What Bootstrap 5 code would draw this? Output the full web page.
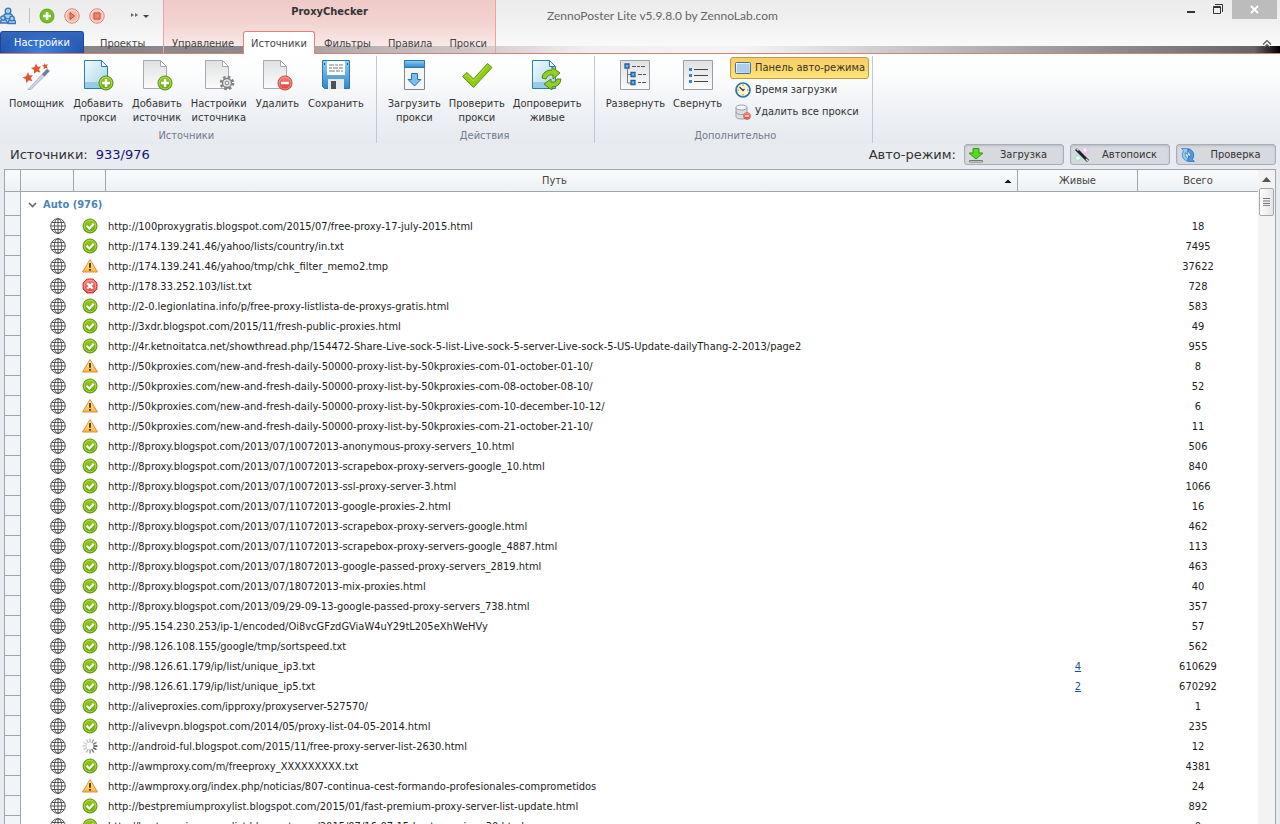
<!DOCTYPE html>
<html lang="ru">
<head>
<meta charset="utf-8">
<meta name="viewport" content="width=device-width, initial-scale=1">
<title>ZennoPoster Lite v5.9.8.0 by ZennoLab.com</title>
<link href="https://cdn.jsdelivr.net/npm/bootstrap@5.3.0/dist/css/bootstrap.min.css" rel="stylesheet">
<style>
  body { font: 11px/14px "DejaVu Sans Condensed", "DejaVu Sans", sans-serif; color: #333; background: #e8ebf0; }
  button, a { color: inherit; }
  svg { display: block; flex: none; }
  .plain { background: none; border: 0; padding: 0; }
  .verdana { font-family: "DejaVu Sans", sans-serif; font-size: 13px; }

  /* title bar and tabs */
  .titlebar {
    height: 54px; border-bottom: 1px solid #d97f7d;
    background:
      linear-gradient(90deg, #858585 0, #8c8a8a 19%, #b5adad 27%, #d2c8c8 37%, #efefef 46%, #f4f4f4 58%, #c6c6c6 71%, #b0b0b0 77%, #666 98%, #000 100%) bottom / 100% 7px no-repeat,
      linear-gradient(#ececec, #f1f1f1 45%, #fcfcfc);
  }
  .left-part { flex: 0 0 163px; }
  .context-part {
    border: solid #e9a3a0; border-width: 0 1px;
    background: linear-gradient(#efcbc8, #f2d3d0 50%, #f9e9e7) top / 100% calc(100% - 7px) no-repeat;
  }
  .context-tabs { gap: 1px; }
  .caption-row { height: 31px; }
  .context-name { padding-top: 5px; }
  .quick { gap: 9px; }
  .tab-link { height: 22px; padding: 5px 7px 0; border: 1px solid transparent; border-bottom: 0; color: #444; text-decoration: none; }
  .tab-link.active { height: 23px; background: #fff; border-color: #e08480; border-radius: 3px 3px 0 0; }
  .app-tab { width: 84px; height: 22px; color: #fff; border: 1px solid #1d4795; border-bottom: 0; border-radius: 3px 3px 0 0;
    background: radial-gradient(ellipse at 50% 100%, #3f86e0, transparent 70%), linear-gradient(#3567bd, #1f53ae); }
  .product { font: 12px/16px Lato, "Noto Sans", sans-serif; color: #666; padding: 8px 0 0 51px; }
  .close-box { width: 45px; height: 19px; background: #bcbcbc; margin-right: 3px; }

  /* ribbon */
  .ribbon { height: 90px; padding-top: 2px; background: linear-gradient(#fff, #fbfcfd 25%, #eceff4 70%, #e6e9ee); }
  .ribbon-group { height: 87px; padding: 3px 8px 0 7px; border-right: 1px solid #c3c7cf; }
  .ribbon-group:first-child { padding-left: 5px; }
  .ribbon-group:last-child { padding-right: 3px; }
  .spaced { gap: 1px; }
  .big { padding: 0 4px; }
  .big span { margin-top: 6px; line-height: 14px; }
  .group-name { color: #74798c; line-height: 14px; }
  .small-cmd { height: 22px; padding: 0 3px 0 4px; border: 1px solid transparent; border-radius: 3px; gap: 4px; text-align: left; }
  .small-cmd.on { border-color: #c59a37; background: linear-gradient(#f6cd6b, #fbd766 50%, #ffe57c); }
  .small-list { margin: -2px 0 0 4px; }

  /* status line */
  .status { height: 25px; padding: 0 4px 4px 10px; }
  .modes { gap: 6px; }
  .mode { width: 100px; height: 21px; padding: 0 0 0 3px; border: 1px solid #a9adb5; border-radius: 3px; background: #d6d9de; box-shadow: inset 0 1px 2px #b6bac2;
    font: 11px/14px "DejaVu Sans Condensed", "DejaVu Sans", sans-serif; }
  .counter { color: #12127e; }

  /* list of sources */
  .panel { margin: 0 4px; min-height: 0; border: 1px solid #a0a6b0; border-bottom: 0; background: #fff; }
  .sources { table-layout: fixed; border-collapse: separate; border-spacing: 0; color: #1c1c1c; }
  .sources th, .sources td { padding: 0; white-space: nowrap; overflow: hidden; }
  .sources th { height: 22px; font-weight: 400; text-align: center; color: #444; border: solid #a0a6b0; border-width: 0 1px 1px 0; background: linear-gradient(#fafbfc, #edf1f4); }
  .sources th:last-child { border-right: 0; }
  .sources td { height: 20px; padding-top: 1px; text-align: center; }
  .sources td:first-child { background: #f2f5f8; border: solid #a0a6b0; border-width: 0 1px 1px 0; }
  .sources td svg { margin: auto; }
  .sources td.pic { padding-top: 0; }
  .sources td.kind { padding-left: 20px; }
  .sources td.addr { text-align: left; padding-left: 2px; }
  .sources .group-line td { height: 24px; }
  .group-line .title { color: #4a86b8; }
  .sources a { color: #1b4f9c; }
  .scroll { width: 17px; background: #f3f3f4; }
  .thumb { width: 15px; height: 28px; border: 1px solid #a3a6ab; border-radius: 2px; background: linear-gradient(90deg, #fdfdfd, #e4e5e8); }
</style>
</head>
<body class="vh-100 overflow-hidden d-flex flex-column">

<svg width="0" height="0" class="position-absolute" aria-hidden="true">
  <defs>
    <linearGradient id="gBlue" x1="0" y1="0" x2="1" y2="1"><stop stop-color="#f1fafd"/><stop offset="1" stop-color="#a5d4ea"/></linearGradient>
    <linearGradient id="gGray" x1="0" y1="0" x2="0" y2="1"><stop stop-color="#dfe0e2"/><stop offset="1" stop-color="#fcfcfc"/></linearGradient>
    <linearGradient id="gGreen" x1="0" y1="0" x2="0" y2="1"><stop stop-color="#9ccb1e"/><stop offset="1" stop-color="#62a50e"/></linearGradient>
    <linearGradient id="gRed" x1="0" y1="0" x2="0" y2="1"><stop stop-color="#f4837a"/><stop offset="1" stop-color="#df3f35"/></linearGradient>
    <linearGradient id="gWarn" x1="0" y1="0" x2="0" y2="1"><stop stop-color="#fff0b8"/><stop offset="1" stop-color="#f7b73c"/></linearGradient>
    <linearGradient id="gSky" x1="0" y1="0" x2="0" y2="1"><stop stop-color="#8fd0f2"/><stop offset="1" stop-color="#2e86cf"/></linearGradient>
    <symbol id="plus" viewBox="0 0 16 16"><circle cx="8" cy="8" r="7" fill="url(#gGreen)" stroke="#4d8a0c"/><circle cx="8" cy="8" r="5.9" fill="none" stroke="#c7e68a" stroke-width=".7"/><path d="M8 4v8M4 8h8" stroke="#fff" stroke-width="2.4"/></symbol>
    <symbol id="minus" viewBox="0 0 16 16"><circle cx="8" cy="8" r="7" fill="url(#gRed)" stroke="#c43c34"/><circle cx="8" cy="8" r="6" fill="none" stroke="#f7aaa4" stroke-width=".7"/><path d="M4 8h8" stroke="#fff" stroke-width="2.4"/></symbol>
    <symbol id="pageBlue" viewBox="0 0 32 32"><path d="M2.5 1.500h17l6 6v22h-23z" fill="url(#gBlue)" stroke="#2c7fa8"/><path d="M3 23h22v6H3z" fill="#86c0dc" opacity=".7"/><path d="M19.500 1.500v6h6z" fill="#fff" stroke="#2c7fa8"/></symbol>
    <symbol id="pageGray" viewBox="0 0 32 32"><path d="M2.5 1.500h17l6 6v22h-23z" fill="url(#gGray)" stroke="#a8aaad"/><path d="M19.500 1.500v6h6z" fill="#fff" stroke="#a8aaad"/></symbol>
    <symbol id="globe" viewBox="0 0 16 16"><g fill="none" stroke="#444" stroke-width=".9"><circle cx="8" cy="8" r="7.300" fill="#fff"/><ellipse cx="8" cy="8" rx="3.700" ry="7.300"/><path d="M8 .7v14.600M.7 8h14.600M2 4.500h12M2 11.500h12"/></g></symbol>
    <symbol id="ok" viewBox="0 0 16 16"><circle cx="8" cy="8" r="7" fill="url(#gGreen)" stroke="#5a930f"/><circle cx="8" cy="8" r="5.800" fill="none" stroke="#b4dc5c" stroke-width=".8"/><path d="M4.500 7.800 7.300 10.600 11.700 5.800" fill="none" stroke="#fff" stroke-width="2.100"/></symbol>
    <symbol id="warn" viewBox="0 0 16 16"><path d="M8 1.500 15.500 14H.5z" fill="url(#gWarn)" stroke="#dc9035" stroke-linejoin="round"/><path d="M8 5v4.800M8 11v1.800" stroke="#4a3210" stroke-width="1.800"/></symbol>
    <symbol id="bad" viewBox="0 0 16 16"><path d="M5 1h6l4 4v6l-4 4H5l-4-4V5z" fill="url(#gRed)" stroke="#cf3d38"/><path d="M5.800 2.500h4.400l3.300 3.300v4.400l-3.300 3.300H5.800l-3.300-3.300V5.800z" fill="none" stroke="#f6a8a2" stroke-width=".8"/><path d="m5.200 5.200 5.600 5.600m0-5.600-5.600 5.600" stroke="#fff" stroke-width="2.300"/></symbol>
    <symbol id="busy" viewBox="0 0 16 16"><g stroke-width="1.500" stroke="#444"><path d="M8 .5v4" opacity=".35"/><path d="m11.700 1.500-2 3.500" opacity=".5"/><path d="m14.500 4.300-3.500 2" opacity=".7"/><path d="M15.500 8h-4"/><path d="m14.500 11.700-3.500-2" opacity=".9"/><path d="m11.700 14.500-2-3.500" opacity=".75"/><path d="M8 15.500v-4" opacity=".55"/><path d="m4.300 14.500 2-3.500" opacity=".4"/><path d="m1.500 11.700 3.500-2" opacity=".3"/><path d="M.5 8h4" opacity=".25"/><path d="m1.500 4.300 3.500 2" opacity=".22"/><path d="m4.300 1.500 2 3.500" opacity=".3"/></g></symbol>
  </defs>
</svg>

<header class="titlebar d-flex flex-shrink-0">
  <div class="left-part">
    <div class="caption-row quick d-flex align-items-center">
      <svg width="16" height="18" viewBox="0 0 16 18"><g fill="#a9d0ef" stroke="#3777b5" stroke-width="1.300"><path d="M3.500 10Q3.500 6.500 8 6.500t4.500 3.500l-4.500 2z"/><circle cx="8" cy="4" r="2.800"/><path d="M.5 16q0-4 3-4t4 4z"/><circle cx="3" cy="11" r="2.200"/><path d="M8 16.500q0-4 4-4t3.500 4z"/><circle cx="12" cy="11.500" r="2.300"/></g></svg>
      <span class="vr ms-1 my-2"></span>
      <button class="plain" aria-label="Добавить"><svg width="16" height="16" viewBox="0 0 16 16"><circle cx="8" cy="8" r="7.500" fill="#67b01a"/><circle cx="8" cy="8" r="6.600" fill="#78bd28"/><path d="M8 4v8M4 8h8" stroke="#fff" stroke-width="2.600"/></svg></button>
      <button class="plain" aria-label="Запустить"><svg width="16" height="16" viewBox="0 0 16 16"><circle cx="8" cy="8" r="7.200" fill="#f8ddd6" stroke="#e0806f"/><circle cx="8" cy="8" r="5.500" fill="#f2bcae"/><path d="M6 4.500 10.500 8 6 11.500z" fill="#e98876" stroke="#c84b36"/></svg></button>
      <button class="plain" aria-label="Остановить"><svg width="16" height="16" viewBox="0 0 16 16"><circle cx="8" cy="8" r="7.200" fill="#f8ddd6" stroke="#e0806f"/><circle cx="8" cy="8" r="5.500" fill="#f2bcae"/><path d="M5 5h6v6H5z" fill="#e98876" stroke="#c84b36"/></svg></button>
      <button class="plain ms-3" aria-label="Настройка панели"><svg width="20" height="8" viewBox="0 0 20 8"><path d="M1 1l3 2-3 2zM5 1l3 2-3 2z" fill="#666"/><path d="M13 3h6l-3 3z" fill="#444"/></svg></button>
    </div>
    <nav class="d-flex">
      <button class="app-tab p-0">Настройки</button>
      <a href="#" class="tab-link ms-2">Проекты</a>
    </nav>
  </div>
  <div class="context-part">
    <div class="caption-row context-name text-center fw-bold">ProxyChecker</div>
    <nav class="context-tabs d-flex">
      <a href="#" class="tab-link">Управление</a>
      <a href="#" class="tab-link active" aria-current="page">Источники</a>
      <a href="#" class="tab-link">Фильтры</a>
      <a href="#" class="tab-link">Правила</a>
      <a href="#" class="tab-link">Прокси</a>
    </nav>
  </div>
  <div class="product flex-grow-1">ZennoPoster Lite v5.9.8.0 by ZennoLab.com</div>
  <div class="d-flex flex-column justify-content-between">
    <div class="d-flex align-items-start">
      <button class="plain me-3" aria-label="Свернуть окно"><svg width="10" height="19" viewBox="0 0 10 19"><path d="M1 12h8" stroke="#333" stroke-width="2"/></svg></button>
      <button class="plain me-2" aria-label="Восстановить окно"><svg width="12" height="19" viewBox="0 0 12 19"><path d="M1.500 6.500h7v7h-7zM1 7.500h8M3 4.500h7.500V12" fill="none" stroke="#333"/></svg></button>
      <button class="plain close-box" aria-label="Закрыть"><svg class="mx-auto" width="9" height="9" viewBox="0 0 9 9"><path d="m1 1 7 7m0-7-7 7" stroke="#fff" stroke-width="1.800"/></svg></button>
    </div>
    <button class="plain ms-auto me-2 mb-1" aria-label="Свернуть ленту"><svg width="10" height="10" viewBox="0 0 10 10"><path d="M1 5.500 5 1.500l4 4M2 8.500l3-3 3 3" fill="none" stroke="#555" stroke-width="1.200"/></svg></button>
  </div>
</header>

<section class="ribbon d-flex flex-shrink-0">
  <div class="ribbon-group d-flex flex-column justify-content-between">
    <div class="spaced d-flex align-items-start">
      <button class="plain big"><svg class="mx-auto" width="32" height="32" viewBox="0 0 32 32"><path d="M7 30.500 26 10l2.500 2L10 30.500z" fill="#cdd5e4" stroke="#97a4bd" stroke-width=".7"/><path d="m21 15.500 5-5.500 2.500 2-5 5.500z" fill="#6d7f9e"/><path d="m7 13 1.300 3.400 3.700-.4-2.300 2.900 1.800 3.400-3.600-1L5.200 24l-.4-3.700-3.300-1.900 3.700-1.200zM15 4.500l1.500 3.200 3.600-.2-2.100 2.800 1.300 3.400-3.400-1.100-2.900 2.100v-3.600l-3-2 3.500-1.100zM23.500 4l1 1.800 2.500-.5-1.200 2 1 2.300-2.200-.7-2 1.300.2-2.400-1.800-1.400 2.200-.5z" fill="#e2532f"/></svg><span class="d-block">Помощник</span></button>
      <button class="plain big"><svg class="mx-auto" width="32" height="32" viewBox="0 0 32 32"><use href="#pageBlue"/><use href="#plus" x="16" y="16" width="16" height="16"/></svg><span class="d-block">Добавить<br>прокси</span></button>
      <button class="plain big"><svg class="mx-auto" width="32" height="32" viewBox="0 0 32 32"><use href="#pageGray"/><use href="#plus" x="16" y="16" width="16" height="16"/></svg><span class="d-block">Добавить<br>источник</span></button>
      <button class="plain big"><svg class="mx-auto" width="32" height="32" viewBox="0 0 32 32"><use href="#pageGray"/><circle cx="24" cy="24" r="6" fill="none" stroke="#808285" stroke-width="2.600" stroke-dasharray="2.600 2.110"/><circle cx="24" cy="24" r="4.500" fill="#e4e5e6" stroke="#7d7f82" stroke-width="1.300"/><circle cx="24" cy="24" r="1.800" fill="#fff" stroke="#7d7f82"/></svg><span class="d-block">Настройки<br>источника</span></button>
      <button class="plain big"><svg class="mx-auto" width="32" height="32" viewBox="0 0 32 32"><use href="#pageGray"/><use href="#minus" x="16" y="16" width="16" height="16"/></svg><span class="d-block">Удалить</span></button>
      <button class="plain big"><svg class="mx-auto" width="32" height="32" viewBox="0 0 32 32"><path d="M2.500 1.500h27v28h-25l-2-2z" fill="url(#gSky)" stroke="#2876ad"/><path d="M7 2h18v14H7z" fill="#fff"/><path d="M9 6h5m1 0h3m1 0h4M9 9h3m1 0h5m1 0h4M9 12h6m1 0h4m1 0h2" stroke="#777"/><path d="M8 20h16v10H8z" fill="#e8e9eb"/><path d="M11 22h5v8h-5z" fill="#4b5057"/><path d="M4 4h1v2H4zM27 4h1v2h-1z" fill="#15528a"/></svg><span class="d-block">Сохранить</span></button>
    </div>
    <div class="group-name text-center">Источники</div>
  </div>

  <div class="ribbon-group d-flex flex-column justify-content-between">
    <div class="d-flex align-items-start">
      <button class="plain big"><svg class="mx-auto" width="32" height="32" viewBox="0 0 32 32"><path d="M6.500 1.500h20v29h-20z" fill="#f5f6f8" stroke="#7d8894"/><path d="M6.500 1.500h20v7h-20z" fill="url(#gSky)" stroke="#2d78a8"/><path d="M13.500 14.500h6v6h3.500l-6.500 6.500-6.500-6.500h3.500z" fill="#7ebcec" stroke="#2a71b6"/></svg><span class="d-block">Загрузить<br>прокси</span></button>
      <button class="plain big"><svg class="mx-auto" width="32" height="32" viewBox="0 0 32 32"><path d="m1.500 17.500 4.500-4 6.500 6.500L26.500 4.500l4.500 4-18.500 20z" fill="#8fcc12" stroke="#5f9412"/><path d="m3.500 17.500 2.500-2 6.500 6.500L26.500 6.500" fill="none" stroke="#b8e24e"/></svg><span class="d-block">Проверить<br>прокси</span></button>
      <button class="plain big"><svg class="mx-auto" width="32" height="32" viewBox="0 0 32 32"><use href="#pageBlue" x="-1"/><path d="M11 19q1-8 10-8V8l8 6-7 6v-4q-5-1-7 4z" fill="#94cf25" stroke="#4c8b12"/><path d="M30 20q-1 8-9 8v3l-8-6 7-5v3q5 1 6-3z" fill="#94cf25" stroke="#4c8b12"/></svg><span class="d-block">Допроверить<br>живые</span></button>
    </div>
    <div class="group-name text-center">Действия</div>
  </div>

  <div class="ribbon-group d-flex flex-column justify-content-between">
    <div class="d-flex align-items-start">
      <button class="plain big"><svg class="mx-auto" width="32" height="32" viewBox="0 0 32 32"><path d="M1.500 1.500h29v29h-29z" fill="url(#gGray)" stroke="#9c9ea2"/><path d="M8.500 10v14H12M8.500 15.500H12" fill="none" stroke="#777"/><g fill="#6cb2e6" stroke="#245f9d" stroke-width="1.300"><path d="M6 5h4v4H6zM12 13.500h4v4h-4zM12 21.500h4v4h-4z"/></g><path d="M13 7.500h4m1 0h3m1 0h4M19 15.500h4m1 0h3M19 23.500h3m1 0h4" stroke="#555"/></svg><span class="d-block">Развернуть</span></button>
      <button class="plain big"><svg class="mx-auto" width="32" height="32" viewBox="0 0 32 32"><path d="M1.500 1.500h29v29h-29z" fill="url(#gGray)" stroke="#9c9ea2"/><path d="M12 10.500h14M12 16.500h14M12 22.500h14" stroke="#444"/><path d="M7 9h3v3H7zM7 15h3v3H7zM7 21h3v3H7z" fill="#3a86c8"/></svg><span class="d-block">Свернуть</span></button>
      <div class="small-list d-flex flex-column">
        <button class="plain small-cmd on d-flex align-items-center" aria-pressed="true"><svg width="16" height="16" viewBox="0 0 16 16"><rect x=".5" y="2.500" width="15" height="11" rx="1" fill="url(#gBlue)" stroke="#456f9c"/><path d="M2 4h12v8H2z" fill="#aecdec"/></svg>Панель авто-режима</button>
        <button class="plain small-cmd d-flex align-items-center"><svg width="16" height="16" viewBox="0 0 16 16"><circle cx="8" cy="8" r="7" fill="#fff7cf" stroke="#2c72b0" stroke-width="1.700"/><path d="M8 2.500V4M8 12v1.500M2.500 8H4M12 8h1.500" stroke="#8a7c3a"/><path d="m4.500 5 4 4M8 8.500l1.500-1.500" stroke="#333" stroke-width="1.200"/></svg>Время загрузки</button>
        <button class="plain small-cmd d-flex align-items-center"><svg width="16" height="16" viewBox="0 0 16 16"><path d="M1 3.500v9q0 2.500 5.500 2.500T12 12.500v-9z" fill="#dadde1" stroke="#9ba0a7"/><ellipse cx="6.500" cy="3.500" rx="5.500" ry="2.500" fill="#f2f3f5" stroke="#9ba0a7"/><path d="M1 8q0 2.500 5.500 2.500T12 8" fill="none" stroke="#9ba0a7"/><use href="#minus" x="8" y="8" width="8" height="8"/></svg>Удалить все прокси</button>
      </div>
    </div>
    <div class="group-name text-center">Дополнительно</div>
  </div>
</section>

<section class="status verdana d-flex align-items-center flex-shrink-0">
  <span>Источники:</span><span class="counter ms-2">933/976</span>
  <span class="ms-auto me-2">Авто-режим:</span>
  <div class="modes d-flex">
    <button class="plain mode d-flex align-items-center"><svg width="16" height="16" viewBox="0 0 16 16"><path d="M5 1.500h6V6h4L8 12 1 6h4z" fill="#5cd61e" stroke="#2f9a10"/><path d="M1.500 13.500h13v1.500h-13z" fill="#fff" stroke="#777"/></svg><span class="flex-grow-1">Загрузка</span></button>
    <button class="plain mode d-flex align-items-center"><svg width="16" height="16" viewBox="0 0 16 16"><circle cx="4" cy="11" r="4" fill="#a9e5cb" opacity=".7"/><circle cx="11" cy="4" r="4" fill="#e9c6ee" opacity=".8"/><path d="m2 2 12 12" stroke="#222" stroke-width="3"/><path d="m2.500 1.500 2 2M12 12l2 2" stroke="#ddd" stroke-width="1.500"/><path d="M11 1v4M9 3h4M4 9v4M2 11h4" stroke="#fff"/></svg><span class="flex-grow-1">Автопоиск</span></button>
    <button class="plain mode d-flex align-items-center"><svg width="16" height="16" viewBox="0 0 16 16"><path d="M1.500 1.500h6v6L5.500 5.500Q4 8 7.500 11.500v3Q-.5 11 3.500 3.500z" fill="#8cc8f0" stroke="#3b87c8" stroke-width=".8"/><path d="M14.500 14.500h-6v-6l2 2Q12 8 8.500 4.500v-3q8 3.500 4 11z" fill="#4b9de0" stroke="#2771b8" stroke-width=".8"/></svg><span class="flex-grow-1">Проверка</span></button>
  </div>
</section>

<main class="panel d-flex flex-grow-1 overflow-hidden">
  <div class="flex-grow-1 overflow-hidden">
    <table class="sources w-100">
      <colgroup><col style="width:16px"><col style="width:53px"><col style="width:32px"><col><col style="width:120px"><col style="width:120px"></colgroup>
      <thead>
        <tr><th></th><th></th><th></th>
          <th><div class="d-flex align-items-center"><span class="flex-grow-1">Путь</span><svg class="me-1" width="10" height="6" viewBox="0 0 10 6"><path d="M1.500 5 5 1.500 8.500 5z" fill="#111"/></svg></div></th>
          <th>Живые</th><th>Всего</th></tr>
      </thead>
      <tbody id="rows">
        <tr class="group-line"><td></td><td colspan="5"><div class="d-flex align-items-center"><svg class="mx-1" width="14" height="8" viewBox="0 0 14 8"><path d="M4 2l3.500 3.500L11 2" fill="none" stroke="#666" stroke-width="1.600"/></svg><span class="title fw-bold">Auto (976)</span></div></td></tr>
      </tbody>
    </table>
  </div>
  <div class="scroll d-flex flex-column align-items-center flex-shrink-0">
    <svg width="15" height="18" viewBox="0 0 15 18"><path d="M3 12 7.500 7 12 12z" fill="#555"/></svg>
    <div class="thumb d-flex align-items-center justify-content-center"><svg width="7" height="8" viewBox="0 0 7 8"><path d="M0 .5h7M0 3h7M0 5.500h7M0 7.700h7" stroke="#666" stroke-width=".9"/></svg></div>
  </div>
</main>

<script>
  // state icon, address, total, alive
  const sources = [
    ['ok', '100proxygratis.blogspot.com/2015/07/free-proxy-17-july-2015.html', 18],
    ['ok', '174.139.241.46/yahoo/lists/country/in.txt', 7495],
    ['warn', '174.139.241.46/yahoo/tmp/chk_filter_memo2.tmp', 37622],
    ['bad', '178.33.252.103/list.txt', 728],
    ['ok', '2-0.legionlatina.info/p/free-proxy-listlista-de-proxys-gratis.html', 583],
    ['ok', '3xdr.blogspot.com/2015/11/fresh-public-proxies.html', 49],
    ['ok', '4r.ketnoitatca.net/showthread.php/154472-Share-Live-sock-5-list-Live-sock-5-server-Live-sock-5-US-Update-dailyThang-2-2013/page2', 955],
    ['warn', '50kproxies.com/new-and-fresh-daily-50000-proxy-list-by-50kproxies-com-01-october-01-10/', 8],
    ['ok', '50kproxies.com/new-and-fresh-daily-50000-proxy-list-by-50kproxies-com-08-october-08-10/', 52],
    ['warn', '50kproxies.com/new-and-fresh-daily-50000-proxy-list-by-50kproxies-com-10-december-10-12/', 6],
    ['warn', '50kproxies.com/new-and-fresh-daily-50000-proxy-list-by-50kproxies-com-21-october-21-10/', 11],
    ['ok', '8proxy.blogspot.com/2013/07/10072013-anonymous-proxy-servers_10.html', 506],
    ['ok', '8proxy.blogspot.com/2013/07/10072013-scrapebox-proxy-servers-google_10.html', 840],
    ['ok', '8proxy.blogspot.com/2013/07/10072013-ssl-proxy-server-3.html', 1066],
    ['ok', '8proxy.blogspot.com/2013/07/11072013-google-proxies-2.html', 16],
    ['ok', '8proxy.blogspot.com/2013/07/11072013-scrapebox-proxy-servers-google.html', 462],
    ['ok', '8proxy.blogspot.com/2013/07/11072013-scrapebox-proxy-servers-google_4887.html', 113],
    ['ok', '8proxy.blogspot.com/2013/07/18072013-google-passed-proxy-servers_2819.html', 463],
    ['ok', '8proxy.blogspot.com/2013/07/18072013-mix-proxies.html', 40],
    ['ok', '8proxy.blogspot.com/2013/09/29-09-13-google-passed-proxy-servers_738.html', 357],
    ['ok', '95.154.230.253/ip-1/encoded/Oi8vcGFzdGViaW4uY29tL205eXhWeHVy', 57],
    ['ok', '98.126.108.155/google/tmp/sortspeed.txt', 562],
    ['ok', '98.126.61.179/ip/list/unique_ip3.txt', 610629, 4],
    ['ok', '98.126.61.179/ip/list/unique_ip5.txt', 670292, 2],
    ['ok', 'aliveproxies.com/ipproxy/proxyserver-527570/', 1],
    ['ok', 'alivevpn.blogspot.com/2014/05/proxy-list-04-05-2014.html', 235],
    ['busy', 'android-ful.blogspot.com/2015/11/free-proxy-server-list-2630.html', 12],
    ['ok', 'awmproxy.com/m/freeproxy_XXXXXXXXX.txt', 4381],
    ['warn', 'awmproxy.org/index.php/noticias/807-continua-cest-formando-profesionales-comprometidos', 24],
    ['ok', 'bestpremiumproxylist.blogspot.com/2015/01/fast-premium-proxy-server-list-update.html', 892],
    ['ok', 'bestpremiumproxylist.blogspot.com/2015/07/16-07-15-best-premium-30.html', 0]
  ];
  sources[20][1] = '95.154.230.253/ip-1/encoded/Oi8vcGFzdGViaW4uY29tL205eXhWeHVy';
  const icon = name => `<svg width="16" height="16"><use href="#${name}"/></svg>`;
  document.getElementById('rows').insertAdjacentHTML('beforeend', sources.map(([state, path, total, alive]) =>
    `<tr><td></td><td class="pic kind">${icon('globe')}</td><td class="pic">${icon(state)}</td><td class="addr">http://${path}</td>` +
    `<td>${alive ? `<a href="#">${alive}</a>` : ''}</td><td>${total}</td></tr>`).join(''));
</script>
<script src="https://cdn.jsdelivr.net/npm/bootstrap@5.3.0/dist/js/bootstrap.bundle.min.js"></script>
</body>
</html>
